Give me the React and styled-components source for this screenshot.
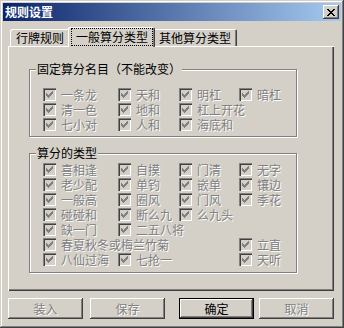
import React from 'react';
import styled, { createGlobalStyle, css } from 'styled-components';

const FONT = `"Noto Sans CJK SC", "Liberation Sans", sans-serif`;

const GlobalStyle = createGlobalStyle`
  html, body {
    margin: 0;
    padding: 0;
    background: #d4d0c8;
  }
  body {
    font-family: ${FONT};
    font-size: 12px;
  }
`;

const raised = css`
  box-shadow: inset -1px -1px #404040, inset 1px 1px #fff, inset -2px -2px #808080,
    inset 2px 2px #d4d0c8;
`;

const Window = styled.div`
  width: 344px;
  height: 328px;
  box-sizing: border-box;
  padding: 3px;
  background: #d4d0c8;
  box-shadow: inset -1px -1px #404040, inset 1px 1px #d4d0c8, inset -2px -2px #808080,
    inset 2px 2px #fff;
  display: flex;
  flex-direction: column;
`;

const TitleBar = styled.div`
  height: 18px;
  display: flex;
  align-items: center;
  justify-content: space-between;
  padding: 0 2px;
  background: linear-gradient(to right, #0a246a, #a6caf0);
`;

const Title = styled.span`
  color: #fff;
  font-weight: bold;
  font-size: 12px;
  line-height: 14px;
`;

const CloseButton = styled.div`
  width: 16px;
  height: 14px;
  background: #d4d0c8;
  ${raised};
  display: flex;
  align-items: center;
  justify-content: center;
`;

const Body = styled.div`
  display: flex;
  flex-direction: column;
  padding: 6px 7px 0 5px;
`;

const TabStrip = styled.div`
  height: 19px;
  display: flex;
  align-items: flex-end;
  padding-left: 2px;
`;

const Tab = styled.div`
  height: 17px;
  box-sizing: border-box;
  padding: 0 6px;
  line-height: 17px;
  color: #000;
  background: #d4d0c8;
  border-radius: 2px 2px 0 0;
  box-shadow: inset 1px 1px #fff, inset -1px 0 #404040, inset -2px 0 #808080;
  white-space: nowrap;

  ${(p) =>
    p.$active &&
    css`
      height: 20px;
      margin: 0 -2px -1px;
      padding: 1px 2px 1px 3px;
      position: relative;
      z-index: 1;
      line-height: 16px;
    `}
`;

const FocusLabel = styled.span`
  display: block;
  height: 100%;
  box-sizing: border-box;
  padding: 0 4px;
  border: 1px dotted #000;
  line-height: 15px;
`;

const Panel = styled.div`
  height: 245px;
  box-sizing: border-box;
  padding: 16px 0 0 21px;
  box-shadow: inset 1px 1px #fff, inset -1px -1px #404040, inset -2px -2px #808080;
  display: flex;
  flex-direction: column;
  gap: 9px;
`;

const Group = styled.fieldset`
  margin: 0;
  width: 268px;
  box-sizing: border-box;
  min-inline-size: 0;
  padding: ${(p) => p.$top}px 0 ${(p) => p.$bottom}px 6px;
  border: 1px solid #808080;
  box-shadow: inset 1px 1px #fff, 1px 1px #fff;
`;

const Legend = styled.legend`
  padding: 0 1px;
  line-height: 14px;
  color: #000;
  background: #d4d0c8;
`;

const Grid = styled.div`
  margin-left: 7px;
  display: grid;
  grid-template-columns: 75px 61px 60px 1fr;
  grid-auto-rows: 15px;
`;

const Item = styled.label`
  grid-row: ${(p) => p.$row};
  grid-column: ${(p) => p.$col} / span ${(p) => p.$span || 1};
  display: flex;
  align-items: center;
  gap: 5px;
  height: 15px;
  white-space: nowrap;
  color: #808080;
  text-shadow: 1px 1px 0 #fff;
`;

const ItemText = styled.span`
  display: inline-block;
  height: 15px;
  line-height: 15px;
  overflow: visible;
`;

const Box = styled.span`
  flex: none;
  width: 13px;
  height: 13px;
  background: #d4d0c8;
  box-shadow: inset 1px 1px #808080, inset 2px 2px #404040, inset -1px -1px #fff,
    inset -2px -2px #d4d0c8;
  display: flex;
  align-items: center;
  justify-content: center;
`;

const ButtonRow = styled.div`
  margin-top: 7px;
  display: flex;
  justify-content: space-between;
`;

const ButtonPair = styled.div`
  display: flex;
  gap: ${(p) => p.$gap}px;
`;

const Button = styled.div`
  width: 75px;
  height: 21px;
  box-sizing: border-box;
  background: #d4d0c8;
  display: flex;
  align-items: center;
  justify-content: center;
  line-height: 14px;
  ${raised};
  color: ${(p) => (p.$disabled ? '#808080' : '#000')};
  text-shadow: ${(p) => (p.$disabled ? '1px 1px 0 #fff' : 'none')};

  ${(p) =>
    p.$default &&
    css`
      box-shadow: inset 0 0 0 1px #000, inset -2px -2px #404040, inset 2px 2px #fff,
        inset -3px -3px #808080;
    `}
`;

const Check = () => (
  <svg width="7" height="7" viewBox="0 0 7 7" shapeRendering="crispEdges">
    <path
      fill="#808080"
      d="M6 0h1v3h-1v1h-1v1h-1v1h-1v1h-1v-1h-1v-1h-1v-3h1v1h1v1h1v-1h1v-1h1z"
    />
  </svg>
);

const CloseIcon = () => (
  <svg width="8" height="7" viewBox="0 0 8 7" shapeRendering="crispEdges">
    <path
      fill="#000"
      d="M0 0h2v1h-2zM6 0h2v1h-2zM1 1h2v1h-2zM5 1h2v1h-2zM2 2h4v1h-4zM3 3h2v1h-2zM2 4h4v1h-4zM1 5h2v1h-2zM5 5h2v1h-2zM0 6h2v1h-2zM6 6h2v1h-2z"
    />
  </svg>
);

const fixedItems = [
  ['一条龙', 1, 1], ['天和', 1, 2], ['明杠', 1, 3], ['暗杠', 1, 4],
  ['清一色', 2, 1], ['地和', 2, 2], ['杠上开花', 2, 3],
  ['七小对', 3, 1], ['人和', 3, 2], ['海底和', 3, 3],
];

const typeItems = [
  ['喜相逢', 1, 1], ['自摸', 1, 2], ['门清', 1, 3], ['无字', 1, 4],
  ['老少配', 2, 1], ['单钓', 2, 2], ['嵌单', 2, 3], ['镶边', 2, 4],
  ['一般高', 3, 1], ['圈风', 3, 2], ['门风', 3, 3], ['季花', 3, 4],
  ['碰碰和', 4, 1], ['断么九', 4, 2], ['么九头', 4, 3],
  ['缺一门', 5, 1], ['二五八将', 5, 2],
  ['春夏秋冬或梅兰竹菊', 6, 1, 3], ['立直', 6, 4],
  ['八仙过海', 7, 1], ['七抢一', 7, 2], ['天听', 7, 4],
];

const CheckList = ({ items }) => (
  <Grid>
    {items.map(([text, row, col, span]) => (
      <Item key={text} $row={row} $col={col} $span={span}>
        <Box>
          <Check />
        </Box>
        <ItemText>{text}</ItemText>
      </Item>
    ))}
  </Grid>
);

export default function App() {
  return (
    <>
      <GlobalStyle />
      <Window>
        <TitleBar>
          <Title>规则设置</Title>
          <CloseButton>
            <CloseIcon />
          </CloseButton>
        </TitleBar>
        <Body>
          <TabStrip>
            <Tab>行牌规则</Tab>
            <Tab $active>
              <FocusLabel>一般算分类型</FocusLabel>
            </Tab>
            <Tab>其他算分类型</Tab>
          </TabStrip>
          <Panel>
            <Group $top={11} $bottom={4}>
              <Legend>固定算分名目（不能改变）</Legend>
              <CheckList items={fixedItems} />
            </Group>
            <Group $top={2} $bottom={5}>
              <Legend>算分的类型</Legend>
              <CheckList items={typeItems} />
            </Group>
          </Panel>
          <ButtonRow>
            <ButtonPair $gap={7}>
              <Button $disabled>装入</Button>
              <Button $disabled>保存</Button>
            </ButtonPair>
            <ButtonPair $gap={5}>
              <Button $default>确定</Button>
              <Button $disabled>取消</Button>
            </ButtonPair>
          </ButtonRow>
        </Body>
      </Window>
    </>
  );
}
